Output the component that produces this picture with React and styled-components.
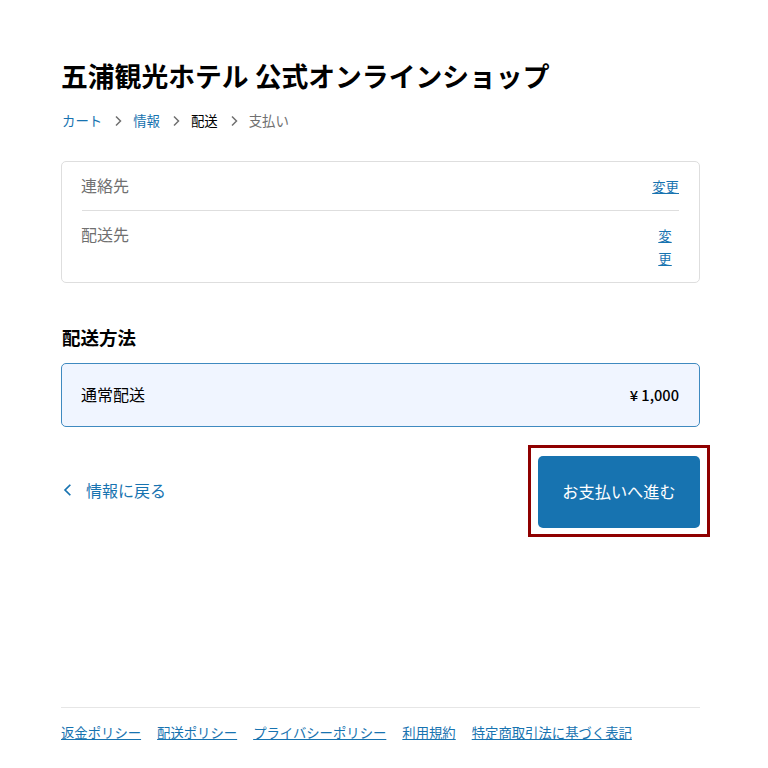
import React from "react";
import styled, { createGlobalStyle } from "styled-components";

const GlobalStyle = createGlobalStyle`
  html, body {
    margin: 0;
    padding: 0;
    background: #ffffff;
    font-family: "Noto Sans CJK JP", "Noto Sans", sans-serif;
  }
  * {
    box-sizing: border-box;
  }
`;

const Chevron = ({ left, size = 12 }) => (
  <svg width={size} height={size} viewBox="0 0 12 12" fill="none" stroke="currentColor" strokeWidth="1.5">
    <path d={left ? "M8 1.5 3.5 6 8 10.5" : "M4 1.5 8.5 6 4 10.5"} />
  </svg>
);

export default function App() {
  return (
    <Page>
      <GlobalStyle />
      <Title>五浦観光ホテル 公式オンラインショップ</Title>
      <Breadcrumb>
        <CrumbLink>カート</CrumbLink>
        <CrumbArrow><Chevron /></CrumbArrow>
        <CrumbLink>情報</CrumbLink>
        <CrumbArrow><Chevron /></CrumbArrow>
        <CrumbCurrent>配送</CrumbCurrent>
        <CrumbArrow><Chevron /></CrumbArrow>
        <CrumbMuted>支払い</CrumbMuted>
      </Breadcrumb>

      <ReviewBox>
        <ReviewRow>
          <ReviewLabel>連絡先</ReviewLabel>
          <ChangeLink>変更</ChangeLink>
        </ReviewRow>
        <ReviewRow $last>
          <ReviewLabel>配送先</ReviewLabel>
          <ChangeLink $narrow>変更</ChangeLink>
        </ReviewRow>
      </ReviewBox>

      <SectionTitle>配送方法</SectionTitle>
      <MethodBox>
        <MethodName>通常配送</MethodName>
        <Price>¥ 1,000</Price>
      </MethodBox>

      <Actions>
        <BackLink>
          <Chevron left size={14} />
          <span>情報に戻る</span>
        </BackLink>
        <PayButton>お支払いへ進む</PayButton>
      </Actions>

      <Footer>
        <FooterLink>返金ポリシー</FooterLink>
        <FooterLink>配送ポリシー</FooterLink>
        <FooterLink>プライバシーポリシー</FooterLink>
        <FooterLink>利用規約</FooterLink>
        <FooterLink>特定商取引法に基づく表記</FooterLink>
      </Footer>
    </Page>
  );
}

const Page = styled.div`
  width: 768px;
  height: 768px;
  padding: 57px 68px 0 61px;
  display: flex;
  flex-direction: column;
  overflow: hidden;
`;

const Title = styled.h1`
  margin: 0;
  font-size: 26.8px;
  line-height: 38px;
  font-weight: 700;
  color: #000000;
`;

const Breadcrumb = styled.nav`
  display: flex;
  align-items: center;
  margin: 15px 0 0 1px;
  height: 20px;
  font-size: 13.4px;
`;

const CrumbLink = styled.span`
  color: #1773b0;
`;

const CrumbCurrent = styled.span`
  color: #000000;
`;

const CrumbMuted = styled.span`
  color: #707070;
`;

const CrumbArrow = styled.span`
  display: flex;
  margin: 1px 9px 0 10px;
  color: #707070;
`;

const ReviewBox = styled.section`
  margin-top: 31px;
  height: 122px;
  padding: 0 20px;
  border: 1px solid #dedede;
  border-radius: 5px;
`;

const ReviewRow = styled.div`
  display: flex;
  justify-content: space-between;
  align-items: flex-start;
  height: ${(p) => (p.$last ? "71px" : "49px")};
  padding-top: 12px;
  border-bottom: ${(p) => (p.$last ? "none" : "1px solid #dedede")};
`;

const ReviewLabel = styled.span`
  font-size: 16px;
  line-height: 22px;
  color: #707070;
  margin-left: -1px;
`;

const ChangeLink = styled.a`
  font-size: 13.4px;
  line-height: 23px;
  color: #1773b0;
  text-decoration: underline;
  text-align: center;
  margin-top: 1px;
  width: ${(p) => (p.$narrow ? "14px" : "auto")};
  margin-right: ${(p) => (p.$narrow ? "7px" : "0")};
`;

const SectionTitle = styled.h2`
  margin: 41px 0 0 1px;
  font-size: 18.5px;
  line-height: 26px;
  font-weight: 700;
  color: #000000;
`;

const MethodBox = styled.div`
  display: flex;
  justify-content: space-between;
  align-items: center;
  margin-top: 13px;
  height: 64px;
  padding: 0 20px;
  background: #f0f5ff;
  border: 1px solid #3f8ac0;
  border-radius: 5px;
  color: #000000;
`;

const MethodName = styled.span`
  font-size: 16px;
  margin-left: -1px;
  margin-bottom: 2px;
`;

const Price = styled.span`
  font-weight: 500;
  font-size: 14.6px;
  margin-bottom: 2px;
`;

const Actions = styled.div`
  display: flex;
  justify-content: space-between;
  align-items: center;
  margin-top: 29px;
`;

const BackLink = styled.a`
  display: flex;
  align-items: center;
  gap: 11px;
  font-size: 16px;
  color: #1773b0;
  margin-bottom: 5px;
`;

const PayButton = styled.button`
  position: relative;
  width: 162px;
  height: 72px;
  padding: 0 0 2px;
  border: none;
  border-radius: 5px;
  background: #1773b0;
  color: #ffffff;
  font-family: inherit;
  font-size: 16.2px;

  /* red highlight frame drawn over the button */
  &::after {
    content: "";
    position: absolute;
    inset: -11px -10px -9px -10px;
    border: 3px solid #8f0000;
  }
`;

const Footer = styled.footer`
  display: flex;
  gap: 16px;
  margin-top: auto;
  margin-bottom: 24px;
  padding-top: 14px;
  border-top: 1px solid #e6e6e6;
`;

const FooterLink = styled.a`
  font-size: 13.35px;
  line-height: 22px;
  color: #1773b0;
  text-decoration: underline;
`;
